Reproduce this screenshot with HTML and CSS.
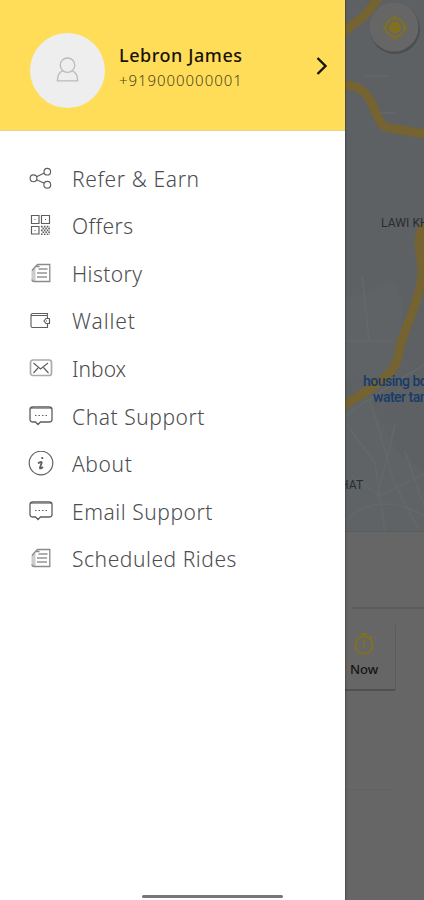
FILE: index.html
```html
<!DOCTYPE html>
<html lang="en">
<head>
<meta charset="utf-8">
<meta name="viewport" content="width=device-width, initial-scale=1">
<title>Menu</title>
<link rel="stylesheet" href="styles.css">
</head>
<body>
<svg class="defs" aria-hidden="true">
  <symbol id="chat" viewBox="0 0 26 26"><path d="M5 3h16c2 0 3 1 3 2.500v10c0 1.500-1 2.500-3 2.500h-8.500l-2.500 2.500-2.500-2.500H5c-2 0-3-1-3-2.500v-10C2 4 3 3 5 3z" stroke-width="1.300"/><path d="M3 4.500h20" stroke-width=".6"/><path d="M7 11.500h13" stroke-dasharray="1.500 2"/></symbol>
  <symbol id="paper" viewBox="0 0 26 26"><path class="shade" d="M3.500 9.500l4-3v14H5l-1.500-1.500z"/><path class="paper-edge" d="M7.500 5.500l2-2h12.300v17H6c-1.500 0-2-1-2-2M4 9.500l3.500-4h4"/><path d="M10.500 8h9M9 12h10M9 16h10"/></symbol>
</svg>
<aside class="drawer">
  <header class="profile">
    <div class="avatar"><svg viewBox="0 0 26 28"><circle cx="13" cy="9" r="7.500"/><path d="M8 15c-4 1.500-5.500 5-5.500 10.300h21C23.500 20 22 16.500 18 15"/></svg></div>
    <div class="person"><div class="name">Lebron James</div><div class="phone">+919000000001</div></div>
    <svg class="chevron" viewBox="0 0 12 20"><path d="M1.500 2L9.500 10L1.500 18"/></svg>
  </header>
  <nav class="menu">
    <a class="item"><svg class="icon" viewBox="0 0 26 26"><circle cx="5.500" cy="12.300" r="3.400"/><circle cx="19.300" cy="5.700" r="3.300"/><circle cx="19.300" cy="18.700" r="3.400"/><path d="M8.600 10.800l7.700-3.700M8.600 13.800l7.700 3.500"/></svg><span class="label refer">Refer &amp; Earn</span></a>
    <a class="item"><svg class="icon" viewBox="0 0 26 26"><path d="M3.500 2.500h7.500v8h-7.500zM13.500 2.500h8v8h-8zM3.500 13.500h7.500v7.500h-7.500z"/><path d="M6.500 6.500h1M17 6.500h1M6.500 17.500h1"/><path stroke-width="1.600" stroke-dasharray="1.600 1.300" d="M13 13.600h9M14.500 15.500h7.500M13 17.400h9M14.500 19.300h7.500M13 21.200h9"/></svg><span class="label offers">Offers</span></a>
    <a class="item"><svg class="icon"><use href="#paper"/></svg><span class="label history">History</span></a>
    <a class="item"><svg class="icon" viewBox="0 0 26 26"><path d="M19.500 7.500V5.500H5C3.500 5.500 3 6 3 7v11c0 1 .5 1.500 1.500 1.500h15v-4M3.500 7.500H18c1 0 1.500.5 1.500 1.500v1.500M21.500 10.500h-3.500l-2 2.500 2 2.500h3.500v-5M18 13h1"/></svg><span class="label wallet">Wallet</span></a>
    <a class="item"><svg class="icon" viewBox="0 0 26 26"><rect class="soft" x="2.500" y="4" width="21" height="15.500" rx="2.500" stroke-width="1.700"/><path d="M5.500 7l7 6 7.500-6M5.500 17l4.500-5M20.500 17L15.500 11.500"/></svg><span class="label inbox">Inbox</span></a>
    <a class="item"><svg class="icon"><use href="#chat"/></svg><span class="label chat">Chat Support</span></a>
    <a class="item"><svg class="icon" viewBox="0 0 26 26"><circle cx="13" cy="12" r="11.800"/><path stroke-width="1.800" d="M14.300 6v2M10 12.200c1.500-1 4-2 3.700-.5L12 16.500c-.5 1.500 1.500 1 3-.5"/></svg><span class="label about">About</span></a>
    <a class="item"><svg class="icon"><use href="#chat"/></svg><span class="label email">Email Support</span></a>
    <a class="item"><svg class="icon"><use href="#paper"/></svg><span class="label rides">Scheduled Rides</span></a>
  </nav>
  <div class="home"></div>
</aside>
<main class="screen">
  <svg class="map" viewBox="345 0 79 531">
    <path class="block" d="M395 280l8 25-4 43-14 28-40 5V300zM345 406l22-10 30 55 27 20v60h-79z"/>
    <path class="street" d="M365 76h24M379 113h17M362 275l7 65M346 341h47M345 416q40-28 79-51M347 425l28 38 10 68M370 400l24 82 25 49M352 476l28 20 44-22M395 425l-18 72M405 451l19 55M345 520q35-30 79-4"/>
    <path class="road" d="M341 34L365 15L381-5M340 84C358 85 367 91 373 106C381 126 382 128 396 129L430 135M423 227C417 235 423 254 422 273C420 303 401 334 399 352C397 378 365 391 340 408"/>
    <path class="road wide" d="M427 230C415 235 423 254 425 278"/>
    <circle class="shadow" cx="395" cy="29" r="25"/><circle class="button" cx="394" cy="27" r="24.500"/>
    <circle class="target" cx="395" cy="27.500" r="9.300"/><circle class="dot" cx="395" cy="27.500" r="6"/>
    <path class="tick" d="M395 15.500v3M395 36.500v3M383 27.500h3M404 27.500h3"/>
    <text class="place" x="381" y="227">LAWI KH</text>
    <text class="place" x="340" y="489">HAT</text>
    <text class="poi" x="363" y="386">housing bo</text><text class="poi" x="373" y="402">water tan</text>
  </svg>
  <section class="booking">
    <div class="address"></div>
    <div class="now"><svg viewBox="0 0 22 24"><circle cx="11" cy="13" r="8.600"/><path d="M8 2h6M11 2v3M17 5l2 2M11 8v7"/></svg><span>Now</span></div>
    <div class="rule"></div>
  </section>
</main>
</body>
</html>
```
FILE: styles.css
```css
* { box-sizing: border-box; }
body { margin: 0; height: 900px; display: flex; overflow: hidden; background: #666; font-family: "Noto Sans", sans-serif; }
.defs { display: none; }
svg { fill: none; stroke: currentColor; }
.drawer { width: 345px; height: 900px; flex: none; display: flex; flex-direction: column; align-items: center; background: #fff; z-index: 1; box-shadow: 0 0 2px #222; }
.profile { width: 100%; height: 131px; flex: none; display: flex; align-items: center; padding: 10px 17px 0 30px; background: #ffdd58; border-bottom: 1px solid #ead391; }
.avatar { width: 75px; height: 75px; border-radius: 50%; background: #eee; display: flex; align-items: center; justify-content: center; color: #bbb; }
.avatar svg { width: 25px; height: 28px; stroke-width: 1.4; }
.person { flex: 1; padding-left: 14px; margin-top: -6px; color: #17140a; white-space: nowrap; }
.name { font-size: 18px; line-height: 26px; font-weight: 500; letter-spacing: .55px; }
.phone { font-size: 15px; line-height: 25px; font-weight: 300; letter-spacing: .95px; color: #4d431d; }
.chevron { width: 12px; height: 20px; margin-top: -8px; stroke: #17140a; stroke-width: 2.4; }
.menu { width: 100%; padding: 24px 28px 0; display: flex; flex-direction: column; }
.item { height: 47.56px; display: flex; align-items: center; gap: 18px; color: #5d5e61; }
.icon { width: 26px; height: 26px; flex: none; stroke-width: 1.15; }
.shade { fill: #ccc; stroke: none; }
.paper-edge { stroke: #8b8b8e; stroke-width: 1.3; }
.soft { stroke: #aaa; }
.label { font-size: 21px; line-height: 30px; font-weight: 300; letter-spacing: .55px; white-space: nowrap; color: #4c4d50; }
.refer { letter-spacing: .63px; }
.offers { letter-spacing: .45px; }
.history { letter-spacing: .4px; }
.wallet { letter-spacing: .95px; }
.inbox { letter-spacing: 0; }
.about { letter-spacing: .6px; }
.home { width: 141px; height: 3px; margin: auto 0 2px 80px; border-radius: 2px; background: #777; }
.screen { width: 79px; height: 900px; flex: none; overflow: hidden; background: #666; }
.map { width: 79px; height: 531px; display: block; background: #5d6163; }
.block { fill: #5f6365; stroke: none; }
.street { stroke: #646869; stroke-width: 1.5; }
.road { stroke: #756332; stroke-width: 9; }
.wide { stroke-width: 12; }
.shadow { fill: #4c4f50; stroke: none; }
.button { fill: #666; stroke: none; }
.target { stroke: #817020; stroke-width: 2; }
.dot { fill: #817020; stroke: none; }
.tick { stroke: #817020; stroke-width: 2.5; }
.place { fill: #292c2e; stroke: none; font: 12px Roboto, sans-serif; letter-spacing: .1px; }
.poi { fill: #173b69; stroke: none; font: 500 14px Roboto, sans-serif; letter-spacing: -.5px; }
.booking { height: 369px; border-top: 1px solid #5a5d5e; }
.address { height: 77px; margin-left: 7px; border-bottom: 2px solid #5b5b5b; }
.now { width: 51px; height: 67px; margin-top: 15px; padding: 8px 0 0 5px; border-right: 1px solid #5c5c5c; border-bottom: 2px solid #505050; border-radius: 0 3px 3px 0; font-size: 13px; line-height: 18px; font-weight: 500; color: #151515; display: flex; flex-direction: column; align-items: flex-start; gap: 4px; }
.now svg { width: 22px; height: 24px; margin-left: 3px; stroke: #82721c; stroke-width: 1.8; }
.rule { width: 47px; height: 1px; margin-top: 98px; background: #626262; }
```
